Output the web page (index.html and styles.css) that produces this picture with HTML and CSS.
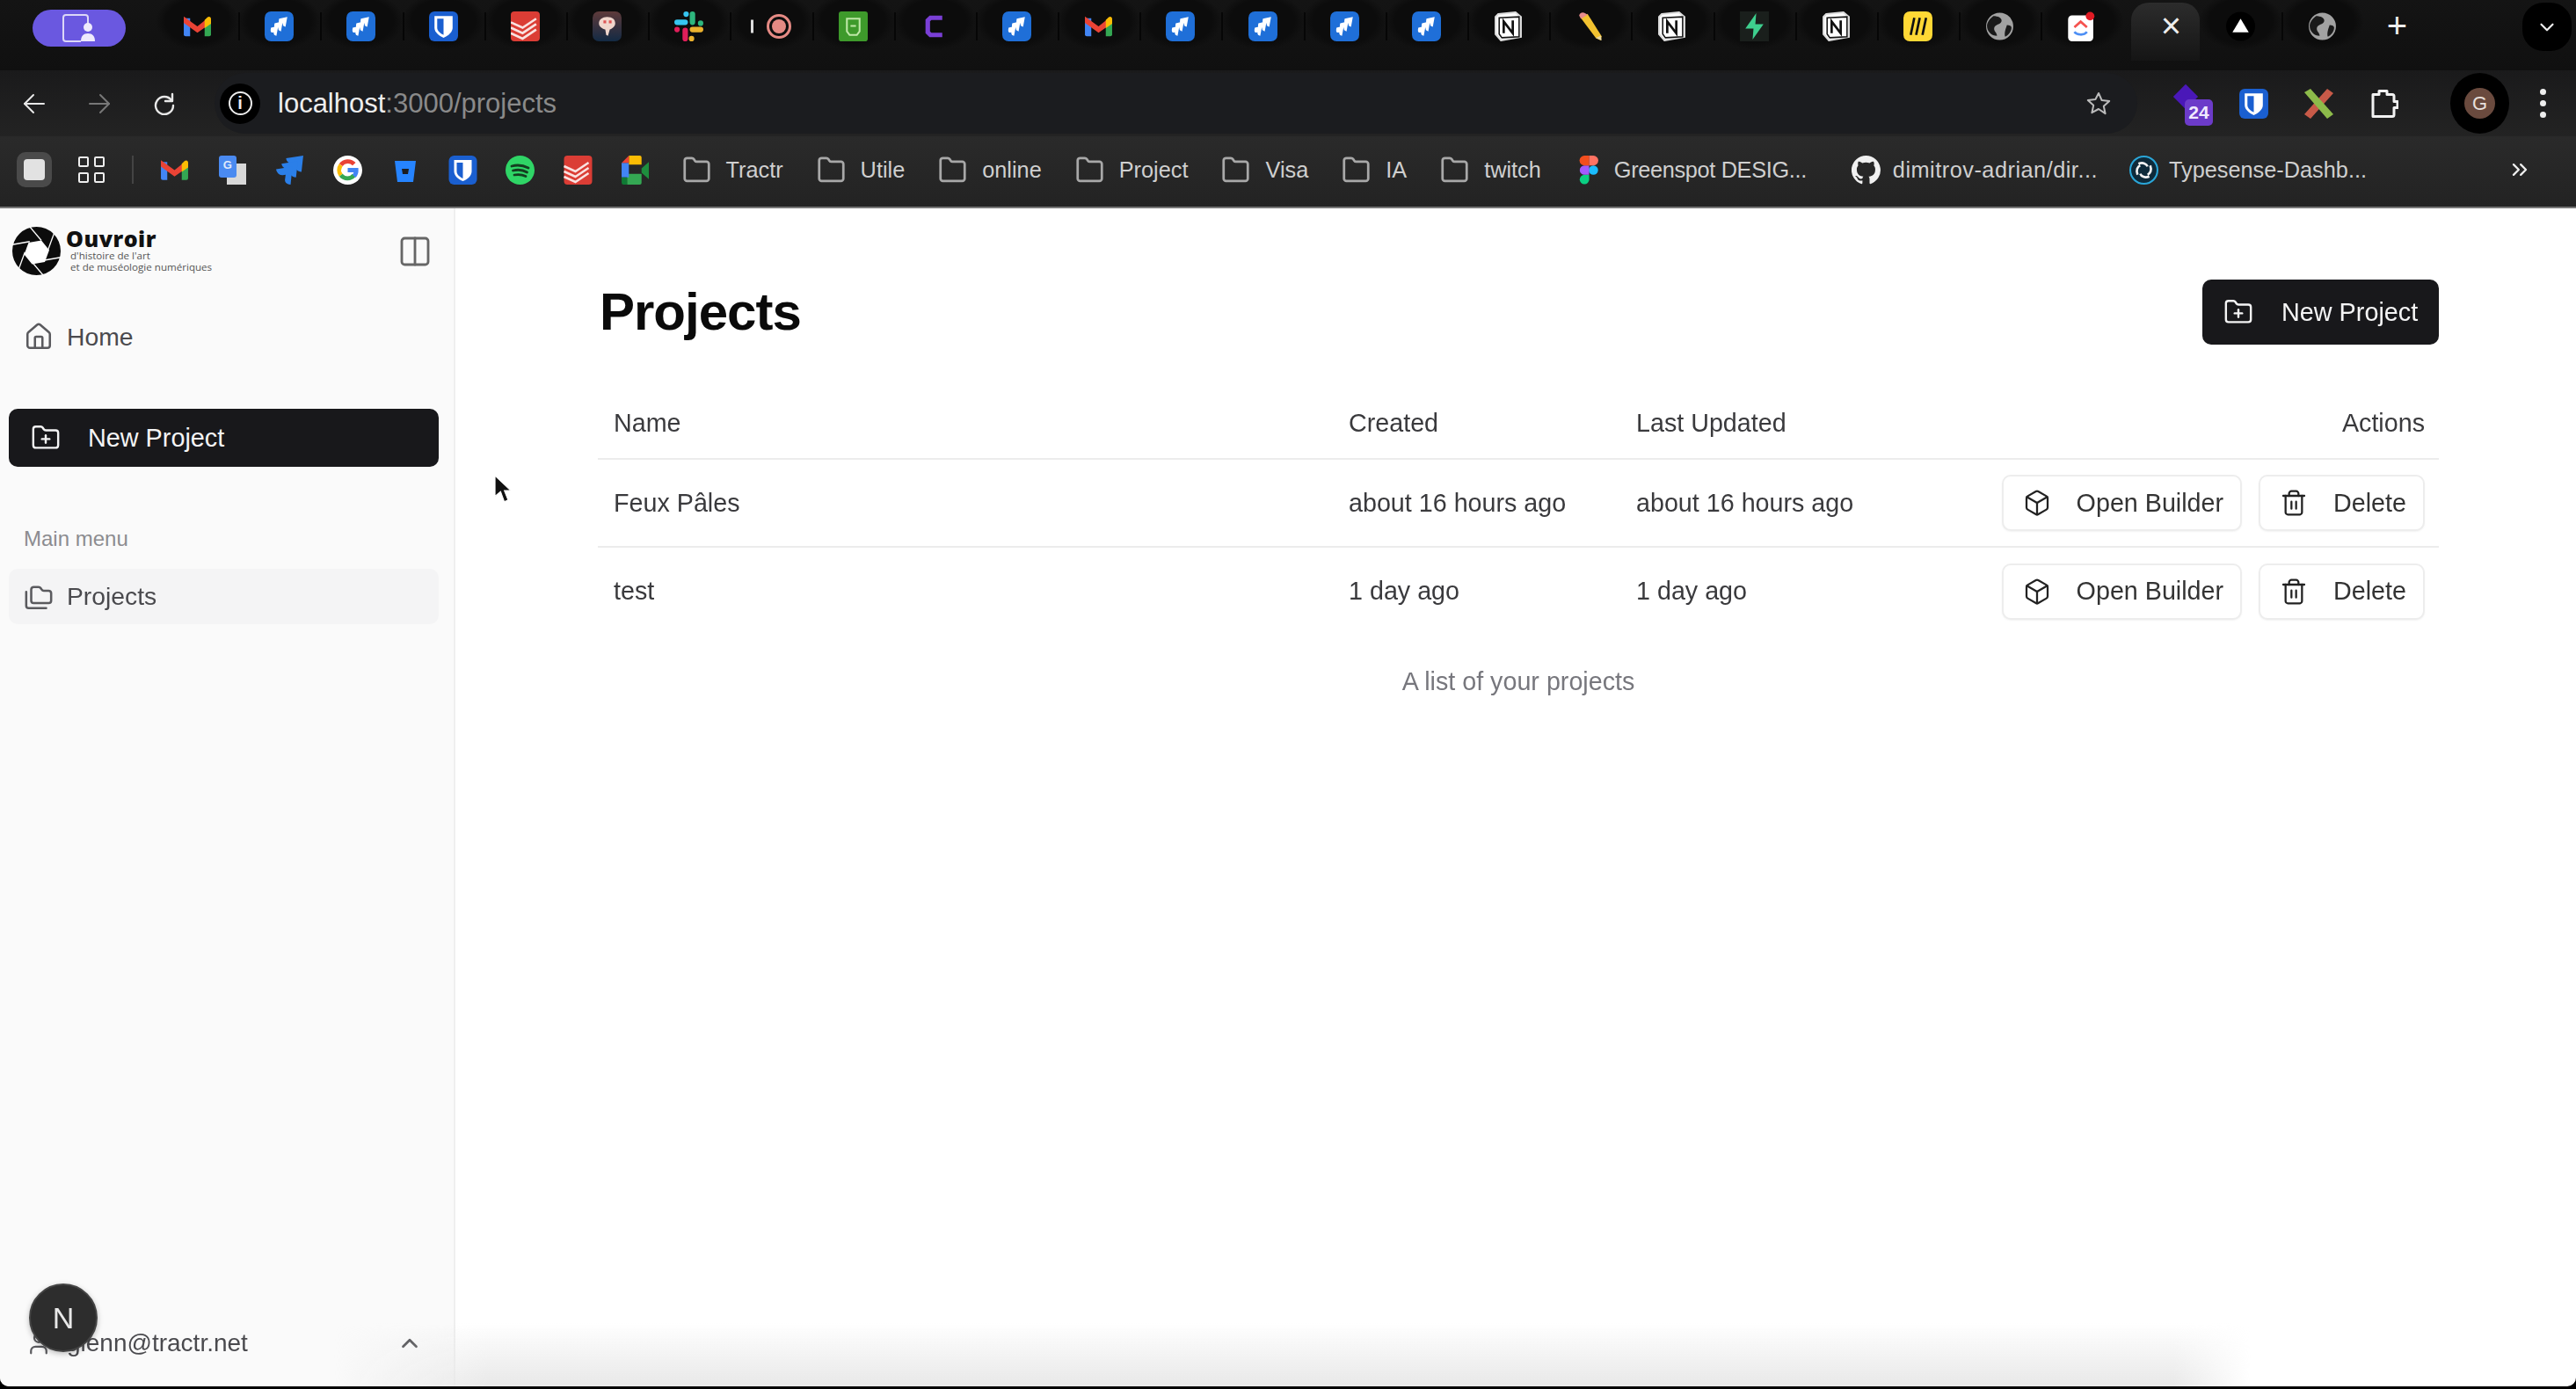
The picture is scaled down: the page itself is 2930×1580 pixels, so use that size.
FILE: index.html
```html
<!DOCTYPE html>
<html lang="en">
<head>
  <meta charset="UTF-8">
  <title>Projects</title>
  <link rel="stylesheet" href="styles.css">
</head>
<body>

<!-- icon sprite -->
<svg class="sprite" xmlns="http://www.w3.org/2000/svg">
  <symbol id="i-house" viewBox="0 0 24 24"><path d="M15 21v-8a1 1 0 0 0-1-1h-4a1 1 0 0 0-1 1v8"/><path d="M3 10a2 2 0 0 1 .709-1.528l7-5.999a2 2 0 0 1 2.582 0l7 5.999A2 2 0 0 1 21 10v9a2 2 0 0 1-2 2H5a2 2 0 0 1-2-2z"/></symbol>
  <symbol id="i-folder-plus" viewBox="0 0 24 24"><path d="M12 10v6"/><path d="M9 13h6"/><path d="M20 20a2 2 0 0 0 2-2V8a2 2 0 0 0-2-2h-7.900a2 2 0 0 1-1.690-.9L9.600 3.900A2 2 0 0 0 7.930 3H4a2 2 0 0 0-2 2v13a2 2 0 0 0 2 2Z"/></symbol>
  <symbol id="i-folders" viewBox="0 0 24 24"><path d="M20 17a2 2 0 0 0 2-2V9a2 2 0 0 0-2-2h-3.900a2 2 0 0 1-1.690-.9l-.81-1.200a2 2 0 0 0-1.670-.9H8a2 2 0 0 0-2 2v9a2 2 0 0 0 2 2Z"/><path d="M2 8v11a2 2 0 0 0 2 2h14"/></symbol>
  <symbol id="i-box" viewBox="0 0 24 24"><path d="M21 8a2 2 0 0 0-1-1.730l-7-4a2 2 0 0 0-2 0l-7 4A2 2 0 0 0 3 8v8a2 2 0 0 0 1 1.730l7 4a2 2 0 0 0 2 0l7-4A2 2 0 0 0 21 16Z"/><path d="m3.300 7 8.700 5 8.700-5"/><path d="M12 22V12"/></symbol>
  <symbol id="i-trash" viewBox="0 0 24 24"><path d="M3 6h18"/><path d="M19 6v14c0 1-1 2-2 2H7c-1 0-2-1-2-2V6"/><path d="M8 6V4c0-1 1-2 2-2h4c1 0 2 1 2 2v2"/><path d="M10 11v6"/><path d="M14 11v6"/></symbol>
  <symbol id="i-panel" viewBox="0 0 24 24"><rect x="3" y="3" width="18" height="18" rx="2"/><path d="M12 3v18"/></symbol>
  <symbol id="i-user" viewBox="0 0 24 24"><path d="M19 21v-2a4 4 0 0 0-4-4H9a4 4 0 0 0-4 4v2"/><circle cx="12" cy="7" r="4"/></symbol>
  <symbol id="i-up" viewBox="0 0 24 24"><path d="m18 15-6-6-6 6"/></symbol>
  <symbol id="i-folder" viewBox="0 0 24 24"><path d="M20 21a2 2 0 0 0 2-2V7a2 2 0 0 0-2-2h-7.900a2 2 0 0 1-1.690-.9L9.600 2.900A2 2 0 0 0 7.930 2H4a2 2 0 0 0-2 2v15a2 2 0 0 0 2 2Z"/></symbol>
  <symbol id="i-more" viewBox="0 0 24 24"><path d="m6 17 5-5-5-5"/><path d="m13 17 5-5-5-5"/></symbol>
  <symbol id="i-back" viewBox="0 0 26 24"><path d="M12 2 2 12l10 10"/><path d="M2 12h22"/></symbol>
  <symbol id="i-fwd" viewBox="0 0 26 24"><path d="m14 2 10 10-10 10"/><path d="M24 12H2"/></symbol>
  <symbol id="i-reload" viewBox="0 0 26 26"><path d="M21 9a10 10 0 1 0 2 6"/><path d="M22 2v8h-8"/></symbol>
  <symbol id="i-star" viewBox="0 0 30 30"><path d="m15 3 3.600 8 8.600.9-6.400 5.800 1.800 8.500L15 21l-7.600 4.200 1.800-8.500-6.400-5.800 8.600-.9z"/></symbol>

  <symbol id="c-gmail" viewBox="0 0 32 32"><path fill="#4285f4" d="M1 7h7v20H3a2 2 0 0 1-2-2z"/><path fill="#34a853" d="M24 10h7v15a2 2 0 0 1-2 2h-5z"/><path fill="#ea4335" d="M1 5 16 16 26 8v8L16 23 1 12z"/><path fill="#fbbc04" d="m24 9 3-3c2-1.500 4-.5 4 2v5l-7 5z"/></symbol>
  <symbol id="c-jira" viewBox="0 0 32 33"><rect width="32" height="33" rx="7" fill="#1f6fd8"/><g fill="#fff"><path d="M16 8 25 6 23 17c-2-.5-3-1.500-3-3v-1l-2 .5c-2 .3-3-1-2-5.500z"/><path d="M11 13 20 11 18 22c-2-.5-3-1.500-3-3v-1l-2 .5c-2 .3-3-1-2-5.500z"/><path d="M7 18 15 16 13 27c-2-.5-3-1.500-3-3v-1l-1 .3c-2 .3-3-1-2-5.300z"/></g></symbol>
  <symbol id="c-jira2" viewBox="0 0 32 32"><g fill="#2b7fe8"><path d="M12 3 31 0l-2 18c-5-.5-7-3-6-7l.5-3-4 .7c-4 .5-7-2-7.500-5.700z"/><path d="M7 9 25 6l-2 18c-5-.5-7-3-6-7l.5-3-3 .5c-4 .5-7-2-7.500-5.500z"/><path d="M1 15 19 12l-2 20c-5-.5-7-3-6-7l.5-4-3 .5c-4 .5-7-3-7.500-6.500z"/></g></symbol>
  <symbol id="c-bw" viewBox="0 0 32 33"><rect width="32" height="33" rx="6" fill="#1a5fd0"/><path fill="#fff" d="M6 5h20v13c0 5-5 9-10 11-5-2-10-6-10-11z"/><path fill="#1a5fd0" d="M9 8h7v18c-3-1.500-7-4-7-8z"/></symbol>
  <symbol id="c-todoist" viewBox="0 0 32 33"><rect width="32" height="33" rx="4" fill="#db3d35"/><path fill="none" stroke="#fff" stroke-opacity=".85" stroke-width="2.600" d="m0 12 13 6 15-10M0 18l13 6 15-10M0 24l13 6 15-10"/></symbol>
  <symbol id="c-brave" viewBox="0 0 32 33"><defs><linearGradient id="g-brave" x1="0" y1="0" x2="0" y2="1"><stop offset="0" stop-color="#5e3a3a"/><stop offset="1" stop-color="#132a44"/></linearGradient></defs><rect width="32" height="33" rx="7" fill="url(#g-brave)"/><path fill="#f0d6cc" d="M16 6c6 0 9 3 9 7s-4 6-6 7l-2 7-2-1-1-6c-3-1-7-3-7-7s4-7 9-7z"/><path fill="#d55" d="M12 10h3v3h-3zM18 10h3v3h-3z"/></symbol>
  <symbol id="c-slack" viewBox="0 0 32 33"><g fill="none" stroke-width="6" stroke-linecap="round"><path stroke="#36c5f0" d="M3 12h9M13 3v0"/><path stroke="#2eb67d" d="M20 3v9M29 13h0"/><path stroke="#ecb22e" d="M29 20h-9M19 30h0"/><path stroke="#e01e5a" d="M12 30v-9M3 20h0"/></g></symbol>
  <symbol id="c-rec" viewBox="0 0 50 33"><rect x="0" y="9" width="3" height="15" fill="#ddd"/><circle cx="32" cy="16.500" r="12.500" fill="none" stroke="#e58a84" stroke-width="3"/><circle cx="32" cy="16.500" r="8" fill="#e58a84"/></symbol>
  <symbol id="c-green" viewBox="0 0 32 33"><rect width="32" height="33" rx="3" fill="#3e9a2b"/><path fill="none" stroke="#bfe8a8" stroke-width="2" d="M9 8h14v14l-3 4h-8l-3-4zM13 16h6"/></symbol>
  <symbol id="c-c" viewBox="0 0 24 33"><path fill="none" stroke="#7a3fd6" stroke-width="5" d="M20 7H7L4 10v13l3 3h13"/></symbol>
  <symbol id="c-pencil" viewBox="0 0 32 36"><path fill="#f2c230" d="m5 8 8-5 17 27-1 5-6-3z"/><path fill="#e88c8c" d="M3 5c0-3 4-5 7-3l3 2-8 5z"/><path fill="#e9d8a0" d="m23 32 6-3 1 6z"/></symbol>
  <symbol id="c-bolt" viewBox="0 0 32 33"><rect width="32" height="33" fill="#1a1f1c"/><path fill="#3ecf8e" d="M18 2 6 19h9l-1 12 12-17h-9z"/></symbol>
  <symbol id="c-miro" viewBox="0 0 32 33"><rect width="32" height="33" rx="7" fill="#ffd835"/><path fill="none" stroke="#111" stroke-width="2.600" d="M12 7 8 26M18 7l-4 19M25 7l-4 19"/></symbol>
  <symbol id="c-globe" viewBox="0 0 32 33"><circle cx="16" cy="16.500" r="15" fill="#a2a2a2"/><path fill="#1a1a1a" d="M9 5c5 0 10 2 9 6s-7 3-8 7 3 5 3 9c-6 0-11-5-11-11 0-4 3-8 7-11zM24 15c3 0 5 1 5 3 0 4-3 8-7 10-1-4 0-7 2-13z"/></symbol>
  <symbol id="c-clickup" viewBox="0 0 34 38"><rect y="5" width="32" height="33" rx="5" fill="#fff"/><path fill="none" stroke="#f5534f" stroke-width="3" d="m8 20 8-7 8 7"/><path fill="none" stroke="#4d8ff5" stroke-width="3" d="M8 26c3 4 12 5 16 0"/><circle cx="28" cy="6" r="5.500" fill="#e01b24"/></symbol>
  <symbol id="c-vercel" viewBox="0 0 32 33"><circle cx="16" cy="16.500" r="16" fill="#000"/><path fill="#fff" d="m16 8 9 15H7z"/></symbol>
  <symbol id="c-google" viewBox="0 0 34 34"><circle cx="17" cy="17" r="17" fill="#fff"/><g fill="none" stroke-width="5"><path stroke="#ea4335" d="M24.500 10A10 10 0 0 0 9 11"/><path stroke="#fbbc05" d="M9 11a10 10 0 0 0 0 12"/><path stroke="#34a853" d="M9 23a10 10 0 0 0 15.500 0"/><path stroke="#4285f4" d="M24.500 24a10 10 0 0 0 2.500-7H17"/></g></symbol>
  <symbol id="c-bb" viewBox="0 0 24 26"><path fill="#2684ff" d="M0 1h24l-3 24H3z"/><path fill="#1c1d20" d="M8 10h8l-1 6H9z"/></symbol>
  <symbol id="c-spotify" viewBox="0 0 33 33"><circle cx="16.500" cy="16.500" r="16.500" fill="#2fd566"/><path fill="none" stroke="#143d20" stroke-width="2.800" stroke-linecap="round" d="M7 12c7-2 13-1 19 2M8.500 17c6-1.500 11-1 16 2M10 22c5-1 9-.5 13 1.500"/></symbol>
  <symbol id="c-meet" viewBox="0 0 30 32"><path fill="#34a853" d="M6 20h16v10a2 2 0 0 1-2 2H6z"/><path fill="#4285f4" d="M0 8h8v16H0z"/><path fill="#fbbc04" d="M8 0h12a2 2 0 0 1 2 2v8H8z"/><path fill="#ea4335" d="M0 8 8 0v8z"/><path fill="#1e8e3e" d="m22 14 8-7v19l-8-7z"/><path fill="#0f7a34" d="M0 24h6v8H2a2 2 0 0 1-2-2z"/></symbol>
  <symbol id="c-figma" viewBox="0 0 22 34"><circle cx="16" cy="17" r="5.500" fill="#1abcfe"/><path fill="#0acf83" d="M5.500 22.500H11V28a5.500 5.500 0 1 1-5.500-5.500z"/><path fill="#a259ff" d="M5.500 11.500H11v11H5.500a5.500 5.500 0 0 1 0-11z"/><path fill="#f24e1e" d="M5.500 0H11v11.500H5.500a5.750 5.750 0 0 1 0-11.500z"/><path fill="#ff7262" d="M11 0h5a5.750 5.750 0 0 1 0 11.500h-5z"/></symbol>
  <symbol id="c-github" viewBox="0 0 24 24"><path fill="#f0f0f0" d="M12 0a12 12 0 0 0-3.800 23.400c.6.100.8-.3.800-.6v-2.200c-3.300.7-4-1.400-4-1.400-.6-1.400-1.400-1.800-1.400-1.800-1.100-.7.100-.7.100-.7 1.200.1 1.800 1.200 1.800 1.200 1.100 1.800 2.800 1.300 3.500 1 .1-.8.400-1.300.8-1.600-2.700-.3-5.500-1.300-5.500-6 0-1.300.5-2.400 1.200-3.200-.1-.3-.5-1.500.1-3.200 0 0 1-.3 3.300 1.200a11.500 11.500 0 0 1 6 0C17.300 4.700 18.300 5 18.300 5c.7 1.700.2 2.900.1 3.200.8.800 1.200 1.900 1.200 3.200 0 4.600-2.800 5.600-5.500 5.900.4.400.8 1.100.8 2.200v3.300c0 .3.200.7.800.6A12 12 0 0 0 12 0z"/></symbol>
  <symbol id="c-typesense" viewBox="0 0 32 32"><circle cx="16" cy="16" r="15" fill="#0e2a3a" stroke="#2aa6d8" stroke-width="2"/><path fill="none" stroke="#f2f2f2" stroke-width="2.600" d="M10 9c5-2 9 0 10 3M23 11c2 5 0 9-3 10M22 23c-5 2-9 0-10-3M9 21c-2-5 0-9 3-10"/></symbol>
  <symbol id="c-cross" viewBox="0 0 33 34"><path fill="#c85a48" d="M26 0 33 5 7 34 0 29z"/><path fill="#8dbb4a" d="M7 0 0 4l26 30 7-5z"/></symbol>
  <symbol id="c-puzzle" viewBox="0 0 33 33"><path fill="none" stroke="#f2f2f2" stroke-width="3" stroke-linejoin="round" d="M4 6h7V2h9v4h6a2 2 0 0 1 2 2v6h4v7h-4v8a2 2 0 0 1-2 2H4z"/></symbol>
  <symbol id="c-pill" viewBox="0 0 40 34"><path fill="none" stroke="#dcd7f7" stroke-width="2" d="M22 32H5a3 3 0 0 1-3-3V5a3 3 0 0 1 3-3h22a3 3 0 0 1 3 3v7"/><circle cx="30" cy="16" r="5" fill="#eeeafc"/><path fill="#eeeafc" d="M22 32c0-6 3-9 8-9s8 3 8 9z"/></symbol>
  <symbol id="c-notion" viewBox="0 0 32 33"><path fill="#fff" stroke="#ddd" stroke-width="2" d="M5 3 24 1l6 5v22l-22 4-6-7V6z"/><path fill="none" stroke="#111" stroke-width="1.500" d="M6 7l22-1v22L9 29l-3-4z"/><path fill="none" stroke="#111" stroke-width="2.600" d="M11 24V11l10 13V10"/></symbol>
  <symbol id="c-logo" viewBox="0 0 55 55">
    <circle cx="27.500" cy="27.500" r="27.500" fill="#0c0c0c"/>
    <path fill="#fff" d="m33 15.500 9 11-5 13.500-14.500 2.500-9-11 5-13.500z"/>
    <g fill="none" stroke="#fff" stroke-width="1.300">
      <path d="M33 15.500 20 0"/>
      <path d="M33 15.500 20 0" transform="rotate(60 27.500 27.500)"/>
      <path d="M33 15.500 20 0" transform="rotate(120 27.500 27.500)"/>
      <path d="M33 15.500 20 0" transform="rotate(180 27.500 27.500)"/>
      <path d="M33 15.500 20 0" transform="rotate(240 27.500 27.500)"/>
      <path d="M33 15.500 20 0" transform="rotate(300 27.500 27.500)"/>
    </g>
  </symbol>
</svg>

<div class="screen">

  <!-- tab strip -->
  <div class="tabstrip">
    <div class="profile-pill"><svg class="pill-icon"><use href="#c-pill"/></svg></div>
    <div class="tab"><svg class="tab-icon"><use href="#c-gmail"/></svg></div>
    <div class="tab"><svg class="tab-icon"><use href="#c-jira"/></svg></div>
    <div class="tab"><svg class="tab-icon"><use href="#c-jira"/></svg></div>
    <div class="tab"><svg class="tab-icon"><use href="#c-bw"/></svg></div>
    <div class="tab"><svg class="tab-icon"><use href="#c-todoist"/></svg></div>
    <div class="tab"><svg class="tab-icon"><use href="#c-brave"/></svg></div>
    <div class="tab"><svg class="tab-icon"><use href="#c-slack"/></svg></div>
    <div class="tab"><svg class="tab-icon tab-icon-rec"><use href="#c-rec"/></svg></div>
    <div class="tab"><svg class="tab-icon"><use href="#c-green"/></svg></div>
    <div class="tab"><svg class="tab-icon"><use href="#c-c"/></svg></div>
    <div class="tab"><svg class="tab-icon"><use href="#c-jira"/></svg></div>
    <div class="tab"><svg class="tab-icon"><use href="#c-gmail"/></svg></div>
    <div class="tab"><svg class="tab-icon"><use href="#c-jira"/></svg></div>
    <div class="tab"><svg class="tab-icon"><use href="#c-jira"/></svg></div>
    <div class="tab"><svg class="tab-icon"><use href="#c-jira"/></svg></div>
    <div class="tab"><svg class="tab-icon"><use href="#c-jira"/></svg></div>
    <div class="tab"><svg class="tab-icon"><use href="#c-notion"/></svg></div>
    <div class="tab"><svg class="tab-icon"><use href="#c-pencil"/></svg></div>
    <div class="tab"><svg class="tab-icon"><use href="#c-notion"/></svg></div>
    <div class="tab"><svg class="tab-icon"><use href="#c-bolt"/></svg></div>
    <div class="tab"><svg class="tab-icon"><use href="#c-notion"/></svg></div>
    <div class="tab"><svg class="tab-icon"><use href="#c-miro"/></svg></div>
    <div class="tab"><svg class="tab-icon"><use href="#c-globe"/></svg></div>
    <div class="tab"><svg class="tab-icon"><use href="#c-clickup"/></svg></div>
    <div class="tab-active">×</div>
    <div class="tab"><svg class="tab-icon"><use href="#c-vercel"/></svg></div>
    <div class="tab"><svg class="tab-icon"><use href="#c-globe"/></svg></div>
    <div class="tab-new">+</div>
    <div class="tab-search"><svg class="ic tab-search-icon"><use href="#i-up"/></svg></div>
  </div>

  <!-- address bar -->
  <div class="toolbar">
    <svg class="ic nav-icon"><use href="#i-back"/></svg>
    <svg class="ic nav-icon nav-off"><use href="#i-fwd"/></svg>
    <svg class="ic nav-icon nav-reload"><use href="#i-reload"/></svg>
    <div class="omnibox">
      <span class="site-info"><span class="site-info-i">i</span></span>
      <span class="url">localhost<span class="url-dim">:3000/projects</span></span>
      <svg class="ic star"><use href="#i-star"/></svg>
    </div>
    <div class="extensions">
      <div class="ext-clock"><span class="ext-clock-shape"></span><span class="ext-badge">24</span></div>
      <svg class="ext-icon"><use href="#c-bw"/></svg>
      <svg class="ext-icon"><use href="#c-cross"/></svg>
      <svg class="ext-icon"><use href="#c-puzzle"/></svg>
    </div>
    <div class="avatar-ring"><span class="avatar">G</span></div>
    <div class="dots"><i></i><i></i><i></i></div>
  </div>

  <!-- bookmarks -->
  <div class="bookmarks">
    <span class="bm-app"><i></i></span>
    <span class="bm-grid"><i></i><i></i><i></i><i></i></span>
    <span class="bm-sep"></span>
    <span class="bm-slot"><svg class="bm-logo"><use href="#c-gmail"/></svg></span>
    <span class="bm-slot"><span class="bm-translate"><span class="bm-translate-g">G</span></span></span>
    <span class="bm-slot"><svg class="bm-logo"><use href="#c-jira2"/></svg></span>
    <span class="bm-slot"><svg class="bm-logo"><use href="#c-google"/></svg></span>
    <span class="bm-slot"><svg class="bm-logo bm-logo-small"><use href="#c-bb"/></svg></span>
    <span class="bm-slot"><svg class="bm-logo"><use href="#c-bw"/></svg></span>
    <span class="bm-slot"><svg class="bm-logo"><use href="#c-spotify"/></svg></span>
    <span class="bm-slot"><svg class="bm-logo"><use href="#c-todoist"/></svg></span>
    <span class="bm-slot"><svg class="bm-logo"><use href="#c-meet"/></svg></span>
    <span class="bm bm-first"><svg class="ic bm-folder"><use href="#i-folder"/></svg>Tractr</span>
    <span class="bm"><svg class="ic bm-folder"><use href="#i-folder"/></svg>Utile</span>
    <span class="bm"><svg class="ic bm-folder"><use href="#i-folder"/></svg>online</span>
    <span class="bm"><svg class="ic bm-folder"><use href="#i-folder"/></svg>Project</span>
    <span class="bm"><svg class="ic bm-folder"><use href="#i-folder"/></svg>Visa</span>
    <span class="bm"><svg class="ic bm-folder"><use href="#i-folder"/></svg>IA</span>
    <span class="bm"><svg class="ic bm-folder"><use href="#i-folder"/></svg>twitch</span>
    <span class="bm bm-greenspot"><svg class="bm-folder"><use href="#c-figma"/></svg>Greenspot DESIG...</span>
    <span class="bm bm-github"><svg class="bm-folder"><use href="#c-github"/></svg>dimitrov-adrian/dir...</span>
    <span class="bm bm-typesense"><svg class="bm-folder"><use href="#c-typesense"/></svg>Typesense-Dashb...</span>
    <svg class="ic bm-more"><use href="#i-more"/></svg>
  </div>

  <!-- page -->
  <div class="page">
    <aside class="sidebar">
      <div class="side-top">
        <div class="brand">
          <svg class="brand-logo"><use href="#c-logo"/></svg>
          <div class="brand-text">
            <div class="brand-name">Ouvroir</div>
            <div class="brand-sub">d'histoire de l'art<br>et de muséologie numériques</div>
          </div>
          <svg class="ic panel-toggle"><use href="#i-panel"/></svg>
        </div>
        <a class="side-link side-home"><svg class="ic side-icon"><use href="#i-house"/></svg>Home</a>
        <a class="btn-dark side-new"><svg class="ic btn-icon"><use href="#i-folder-plus"/></svg>New Project</a>
        <div class="side-label">Main menu</div>
        <a class="side-link side-current"><svg class="ic side-icon"><use href="#i-folders"/></svg>Projects</a>
      </div>
      <div class="side-user">
        <svg class="ic side-icon user-icon"><use href="#i-user"/></svg>
        <span class="user-mail">glenn@tractr.net</span>
        <svg class="ic user-chevron"><use href="#i-up"/></svg>
      </div>
    </aside>

    <main class="content">
      <div class="content-head">
        <h1>Projects</h1>
        <a class="btn-dark head-new"><svg class="ic btn-icon"><use href="#i-folder-plus"/></svg>New Project</a>
      </div>
      <table class="projects">
        <caption>A list of your projects</caption>
        <thead>
          <tr><th class="col-name">Name</th><th class="col-created">Created</th><th class="col-updated">Last Updated</th><th class="col-actions">Actions</th></tr>
        </thead>
        <tbody>
          <tr>
            <td>Feux Pâles</td><td>about 16 hours ago</td><td>about 16 hours ago</td>
            <td class="cell-actions"><div class="actions">
              <a class="btn-line"><svg class="ic line-icon"><use href="#i-box"/></svg>Open Builder</a>
              <a class="btn-line"><svg class="ic line-icon"><use href="#i-trash"/></svg>Delete</a>
            </div></td>
          </tr>
          <tr>
            <td>test</td><td>1 day ago</td><td>1 day ago</td>
            <td class="cell-actions"><div class="actions">
              <a class="btn-line"><svg class="ic line-icon"><use href="#i-box"/></svg>Open Builder</a>
              <a class="btn-line"><svg class="ic line-icon"><use href="#i-trash"/></svg>Delete</a>
            </div></td>
          </tr>
        </tbody>
      </table>
    </main>

    <!-- overlays -->
    <div class="bottom-fade"></div>
    <svg class="cursor" viewBox="0 0 18 30"><path d="M1 1v22l6-5 4 11 4-2-4-10h7z" fill="#111" stroke="#fff" stroke-width="1"/></svg>
    <div class="dev-badge">N</div>
  </div>
</div>

</body>
</html>
```

FILE: styles.css
```css
* {
  box-sizing: border-box;
}

html, body {
  margin: 0;
  height: 100%;
  overflow: hidden;
  background: #000;
}

body {
  font-family: "Liberation Sans", Arial, sans-serif;
}

.sprite {
  position: absolute;
  width: 0;
  height: 0;
}

.ic {
  fill: none;
  stroke: currentColor;
  stroke-width: 2;
  stroke-linecap: round;
  stroke-linejoin: round;
}

.screen {
  display: flex;
  flex-direction: column;
  height: 1577px;
  filter: blur(0.7px);
}

/* Tab strip */
.tabstrip {
  display: flex;
  align-items: flex-start;
  height: 80px;
  padding-left: 37px;
  background: linear-gradient(#141414, #101010);
  color: #eee;
}

.profile-pill {
  display: flex;
  align-items: center;
  justify-content: center;
  width: 106px;
  height: 42px;
  margin: 11px 35px 0 0;
  border-radius: 21px;
  background: #6a58e0;
}

.pill-icon {
  width: 40px;
  height: 34px;
}

.tab {
  position: relative;
  display: flex;
  justify-content: center;
  flex: none;
  width: 93.200px;
  height: 56px;
  padding-top: 13px;
  border-radius: 0 0 22px 22px;
  background: radial-gradient(ellipse at center 24px, #0c0c0c 55%, transparent 72%);
}

.tab + .tab::before {
  content: "";
  position: absolute;
  left: 0;
  top: 14px;
  width: 2px;
  height: 32px;
  background: #060606;
}

.tab-icon {
  width: 33px;
  height: 34px;
}

.tab-icon-rec {
  width: 50px;
  margin-left: 4px;
}

.tab-active {
  display: flex;
  justify-content: center;
  flex: none;
  width: 78px;
  height: 66px;
  margin: 3px 0 0 9px;
  padding: 6px 0 0 14px;
  border-radius: 20px 20px 0 0;
  background: linear-gradient(#2c2c2c, #151515);
  font-size: 40px;
  line-height: 40px;
  color: #eee;
}

.tab-new {
  flex: none;
  width: 77px;
  padding-top: 9px;
  text-align: center;
  font-size: 40px;
  line-height: 40px;
  color: #eee;
}

.tab-search {
  display: flex;
  align-items: center;
  justify-content: center;
  width: 56px;
  height: 55px;
  margin: 3px 5px 0 auto;
  border-radius: 24px;
  background: #000;
}

.tab-search-icon {
  width: 26px;
  height: 26px;
  transform: rotate(180deg);
}

/* Address bar */
.toolbar {
  display: flex;
  align-items: center;
  height: 75px;
  padding-left: 26px;
  background: linear-gradient(#1a1a1b, #232323);
  color: #e8e8e8;
}

.nav-icon {
  flex: none;
  width: 26px;
  height: 24px;
  margin-right: 48px;
}

.nav-off {
  color: #777;
}

.nav-reload {
  height: 26px;
  margin-right: 44px;
  stroke-width: 2.400;
}

.omnibox {
  display: flex;
  align-items: center;
  flex: none;
  width: 2187px;
  height: 69px;
  padding: 0 29px 0 6px;
  border-radius: 35px;
  background: #1b1c1f;
}

.site-info {
  display: flex;
  align-items: center;
  justify-content: center;
  flex: none;
  width: 46px;
  height: 46px;
  margin-right: 20px;
  border-radius: 50%;
  background: #000;
}

.site-info-i {
  display: block;
  width: 27px;
  height: 27px;
  border: 2.500px solid #eee;
  border-radius: 50%;
  text-align: center;
  font-size: 20px;
  font-weight: 700;
  line-height: 22px;
  color: #eee;
}

.url {
  font-size: 31px;
  color: #eee;
}

.url-dim {
  color: #8a8a8a;
}

.star {
  width: 30px;
  height: 30px;
  margin-left: auto;
  color: #bbb;
}

.extensions {
  display: flex;
  align-items: center;
  flex: none;
  gap: 41px;
  margin-left: 41px;
}

.ext-clock {
  position: relative;
  width: 46px;
  height: 44px;
  margin: 6px -12px 0 0;
}

.ext-clock-shape {
  position: absolute;
  left: 4px;
  top: 1px;
  width: 20px;
  height: 20px;
  background: #4a18b8;
  transform: rotate(45deg);
}

.ext-badge {
  position: absolute;
  left: 13px;
  top: 14px;
  width: 32px;
  height: 30px;
  border-radius: 5px;
  background: #6c3bc9;
  text-align: center;
  font-size: 21px;
  font-weight: 700;
  line-height: 30px;
  color: #f0eaff;
}

.ext-icon {
  width: 33px;
  height: 34px;
}

.avatar-ring {
  display: flex;
  align-items: center;
  justify-content: center;
  flex: none;
  width: 67px;
  height: 69px;
  margin-left: 59px;
  border-radius: 50%;
  background: #000;
}

.avatar {
  width: 35px;
  height: 35px;
  border-radius: 50%;
  background: #6a4a3e;
  text-align: center;
  font-size: 22px;
  line-height: 35px;
  color: #e8e0dc;
}

.dots {
  display: flex;
  flex-direction: column;
  flex: none;
  gap: 6px;
  margin-left: 35px;
}

.dots i {
  width: 7px;
  height: 7px;
  border-radius: 50%;
  background: #eee;
}

/* Bookmarks bar */
.bookmarks {
  display: flex;
  align-items: center;
  height: 82px;
  padding: 0 50px 4px 19px;
  border-bottom: 2px solid #777;
  background: linear-gradient(#2a2a2a, #232323);
  font-size: 25.300px;
  white-space: nowrap;
  color: #cfcfcf;
}

.bm-app {
  display: flex;
  align-items: center;
  justify-content: center;
  flex: none;
  width: 40px;
  height: 40px;
  border-radius: 10px;
  background: #4a4a4a;
}

.bm-app i {
  width: 24px;
  height: 24px;
  border-radius: 4px;
  background: #e2e2e2;
}

.bm-grid {
  display: grid;
  grid-template-columns: 12px 12px;
  gap: 6px;
  flex: none;
  margin-left: 30px;
}

.bm-grid i {
  height: 12px;
  border: 2.500px solid #eee;
  border-radius: 2px;
}

.bm-sep {
  flex: none;
  width: 2px;
  height: 32px;
  margin: 0 14px 0 31px;
  background: #444;
}

.bm-slot {
  display: flex;
  justify-content: center;
  flex: none;
  width: 65.500px;
}

.bm-logo {
  width: 33px;
  height: 33px;
}

.bm-logo-small {
  width: 24px;
  height: 26px;
  margin-top: 3px;
}

.bm-translate {
  display: block;
  width: 31px;
  height: 33px;
  background: linear-gradient(#d8d8d8, #d8d8d8) no-repeat right bottom / 22px 24px;
}

.bm-translate-g {
  display: block;
  width: 20px;
  height: 25px;
  border-radius: 3px;
  background: #4a8af0;
  text-align: center;
  font-size: 13px;
  font-weight: 700;
  line-height: 22px;
  color: #dfe9fb;
}

.bm {
  display: flex;
  align-items: center;
  flex: none;
  gap: 17px;
  margin-right: 38px;
}

.bm-first {
  margin-left: 20px;
}

.bm-greenspot {
  gap: 12px;
  margin-right: 51px;
  letter-spacing: -0.330px;
}

.bm-github {
  gap: 14px;
  margin-right: 36px;
  letter-spacing: 0.500px;
}

.bm-typesense {
  gap: 12px;
}

.bm-folder {
  flex: none;
  width: 33px;
  height: 33px;
  color: #a8a8a8;
}

.bm-more {
  width: 28px;
  height: 28px;
  margin-left: auto;
  color: #eee;
}

/* Page */
.page {
  position: relative;
  display: flex;
  flex: 1;
  min-height: 0;
  overflow: hidden;
  border-radius: 0 0 10px 10px;
  background: #fff;
}

/* Sidebar */
.sidebar {
  display: flex;
  flex-direction: column;
  justify-content: space-between;
  flex: none;
  width: 518px;
  padding: 21px 17px 33px 10px;
  border-right: 2px solid #efefef;
  background: #fafafa;
  color: #4a4a4e;
}

.brand {
  display: flex;
  align-items: center;
  padding-left: 4px;
}

.brand-logo {
  flex: none;
  width: 55px;
  height: 55px;
}

.brand-text {
  margin-left: 6px;
  font-family: "Open Sans", sans-serif;
}

.brand-name {
  margin-top: -2px;
  font-size: 25px;
  font-weight: 800;
  line-height: 25px;
  letter-spacing: 0.500px;
  color: #111;
}

.brand-sub {
  margin-left: 5px;
  font-size: 11.600px;
  line-height: 13px;
  color: #555;
}

.panel-toggle {
  width: 40px;
  height: 40px;
  margin-left: auto;
  margin-right: 7px;
  color: #666;
  stroke-width: 1.700;
}

.side-link {
  display: flex;
  align-items: center;
  gap: 15px;
  padding-left: 17px;
  font-size: 28.300px;
}

.side-icon {
  flex: none;
  width: 34px;
  height: 34px;
  stroke-width: 1.800;
  color: #5a5a5e;
}

.side-home {
  height: 50px;
  margin-top: 45px;
}

.btn-dark {
  display: flex;
  align-items: center;
  border-radius: 10px;
  background: #18181b;
  font-size: 28.800px;
  color: #f4f4f5;
}

.btn-icon {
  flex: none;
  width: 34px;
  height: 34px;
  stroke-width: 1.700;
}

.side-new {
  gap: 31px;
  height: 66px;
  margin-top: 57px;
  padding-left: 25px;
}

.side-label {
  height: 32px;
  margin-top: 66px;
  padding-left: 17px;
  font-size: 24px;
  line-height: 32px;
  color: #8c8c90;
}

.side-current {
  height: 63px;
  margin-top: 18px;
  border-radius: 10px;
  background: #f4f4f5;
}

.side-user {
  position: relative;
  display: flex;
  align-items: center;
  height: 32px;
  padding-left: 19px;
  font-size: 28px;
}

.user-icon {
  width: 30px;
  height: 30px;
}

.user-mail {
  margin-left: 17px;
}

.user-chevron {
  width: 30px;
  height: 30px;
  margin-left: auto;
  margin-right: 18px;
  color: #4a4a4e;
  stroke-width: 2.200;
}

/* Main column */
.content {
  flex: 1;
  min-width: 0;
  padding: 81px 156px 0 162px;
}

.content-head {
  display: flex;
  align-items: center;
  justify-content: space-between;
  height: 74px;
  margin-bottom: 50px;
}

h1 {
  margin: -2px 0 0 2px;
  font-size: 60px;
  font-weight: 700;
  letter-spacing: -1px;
  color: #0a0a0a;
}

.head-new {
  gap: 32px;
  width: 269px;
  height: 74px;
  padding-left: 24px;
}

.projects {
  width: 100%;
  border-collapse: collapse;
  table-layout: fixed;
  font-size: 28.700px;
  color: #3a3a3d;
}

.projects caption {
  caption-side: bottom;
  padding-top: 37px;
  line-height: 32px;
  color: #77777d;
}

.projects th {
  height: 80px;
  padding: 0 18px;
  border-bottom: 2px solid #ececec;
  text-align: left;
  font-weight: 400;
}

.projects td {
  height: 100px;
  padding: 0 18px;
  border-bottom: 2px solid #ececec;
}

.projects tr:last-child td {
  border-bottom: 0;
}

.col-name {
  width: 836px;
}

.col-created {
  width: 327px;
}

.col-updated {
  width: 390px;
}

.projects .col-actions {
  padding-right: 16px;
  text-align: right;
}

.projects .cell-actions {
  padding-right: 16px;
}

.actions {
  display: flex;
  justify-content: flex-end;
  gap: 19px;
}

.btn-line {
  display: flex;
  align-items: center;
  gap: 30px;
  height: 64px;
  padding: 0 19px 0 23px;
  border: 2px solid #ededed;
  border-radius: 10px;
  background: #fff;
  box-shadow: 0 1px 2px rgba(0, 0, 0, 0.05);
  white-space: nowrap;
  color: #333;
}

.line-icon {
  flex: none;
  width: 32px;
  height: 32px;
  margin: 0 -1px;
  stroke-width: 1.700;
  color: #222;
}

/* Overlays */
.bottom-fade {
  position: absolute;
  left: 380px;
  bottom: 0;
  width: 2180px;
  height: 72px;
  background: linear-gradient(transparent, #e8e8e8);
  pointer-events: none;
  -webkit-mask-image: linear-gradient(to right, transparent, #000 8%, #000 96%, transparent);
  mask-image: linear-gradient(to right, transparent, #000 8%, #000 96%, transparent);
}

.cursor {
  position: absolute;
  left: 562px;
  top: 303px;
  width: 19px;
  height: 32px;
}

.dev-badge {
  position: absolute;
  left: 33px;
  bottom: 39px;
  width: 78px;
  height: 78px;
  border: 2px solid #444;
  border-radius: 50%;
  background: #2d2d2d;
  box-shadow: 0 2px 6px rgba(0, 0, 0, 0.25);
  text-align: center;
  font-size: 34px;
  line-height: 74px;
  color: #e8e8e8;
}
```
